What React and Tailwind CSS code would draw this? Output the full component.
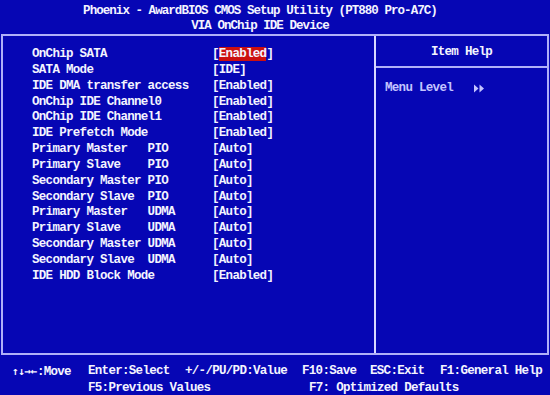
import React from 'react';

const rows = [
  ['OnChip SATA', 'Enabled', true],
  ['SATA Mode', 'IDE'],
  ['IDE DMA transfer access', 'Enabled'],
  ['OnChip IDE Channel0', 'Enabled'],
  ['OnChip IDE Channel1', 'Enabled'],
  ['IDE Prefetch Mode', 'Enabled'],
  ['Primary Master   PIO', 'Auto'],
  ['Primary Slave    PIO', 'Auto'],
  ['Secondary Master PIO', 'Auto'],
  ['Secondary Slave  PIO', 'Auto'],
  ['Primary Master   UDMA', 'Auto'],
  ['Primary Slave    UDMA', 'Auto'],
  ['Secondary Master UDMA', 'Auto'],
  ['Secondary Slave  UDMA', 'Auto'],
  ['IDE HDD Block Mode', 'Enabled'],
];

const keys1 = [
  ['Enter:Select', 'w-[97px]'],
  ['+/-/PU/PD:Value', 'w-[117px]'],
  ['F10:Save', 'w-[68px]'],
  ['ESC:Exit', 'w-[70px]'],
  ['F1:General Help', ''],
];

const Arrows = () => (
  <svg width="12" height="9" viewBox="0 0 12 9" className="inline-block">
    <path d="M1 0.5 L5.5 4.5 L1 8.5 Z M6.5 0.5 L11 4.5 L6.5 8.5 Z" fill="#c4c4ff" />
  </svg>
);

export default function App() {
  return (
    <div
      className="w-[550px] h-[395px] bg-[#0606b4] text-[#f4f4ff] font-bold text-[12.5px] tracking-[-0.7px] overflow-hidden"
      style={{ fontFamily: '"Liberation Mono", "DejaVu Sans Mono", monospace' }}
    >
      {/* title */}
      <div className="h-[34px] pt-[4px] pr-[30px] text-center leading-[15px] whitespace-pre tracking-[-0.95px]">
        <div>Phoenix - AwardBIOS CMOS Setup Utility (PT880 Pro-A7C)</div>
        <div>VIA OnChip IDE Device</div>
      </div>

      {/* main frame */}
      <div className="mx-[1px] h-[321px] border-2 border-[#b0b0f8] flex">
        <div className="w-[371px] pl-[29px] pt-[11px] leading-[15.85px]">
          {rows.map(([label, value, active]) => (
            <div key={label} className="flex whitespace-pre">
              <span className="w-[180px]">{label}</span>
              <span>
                [
                <span className={active ? 'bg-[#cc1010]' : ''}>{value}</span>
                ]
              </span>
            </div>
          ))}
        </div>
        <div className="flex-1 border-l-2 border-[#d8d8ff] flex flex-col">
          <div className="h-[32px] pt-[3px] flex items-center justify-center border-b-2 border-[#b0b0f8]">
            Item Help
          </div>
          <div className="pl-[9px] pt-[11px] text-[#c4c4ff] flex items-center whitespace-pre">
            <span>Menu Level   </span>
            <Arrows />
          </div>
        </div>
      </div>

      {/* footer */}
      <div className="pt-[9px] pl-[12px] leading-[15.5px] whitespace-pre">
        <div className="flex">
          <span className="w-[76px]">
            <span
              className="text-[11px] tracking-[-0.4px]"
              style={{ fontFamily: '"DejaVu Sans Mono", monospace' }}
            >
              ↑↓→←
            </span>
            :Move
          </span>
          {keys1.map(([t, w]) => (
            <span key={t} className={w}>{t}</span>
          ))}
        </div>
        <div className="flex">
          <span className="ml-[76px] w-[221px]">F5:Previous Values</span>
          <span>F7: Optimized Defaults</span>
        </div>
      </div>
    </div>
  );
}
